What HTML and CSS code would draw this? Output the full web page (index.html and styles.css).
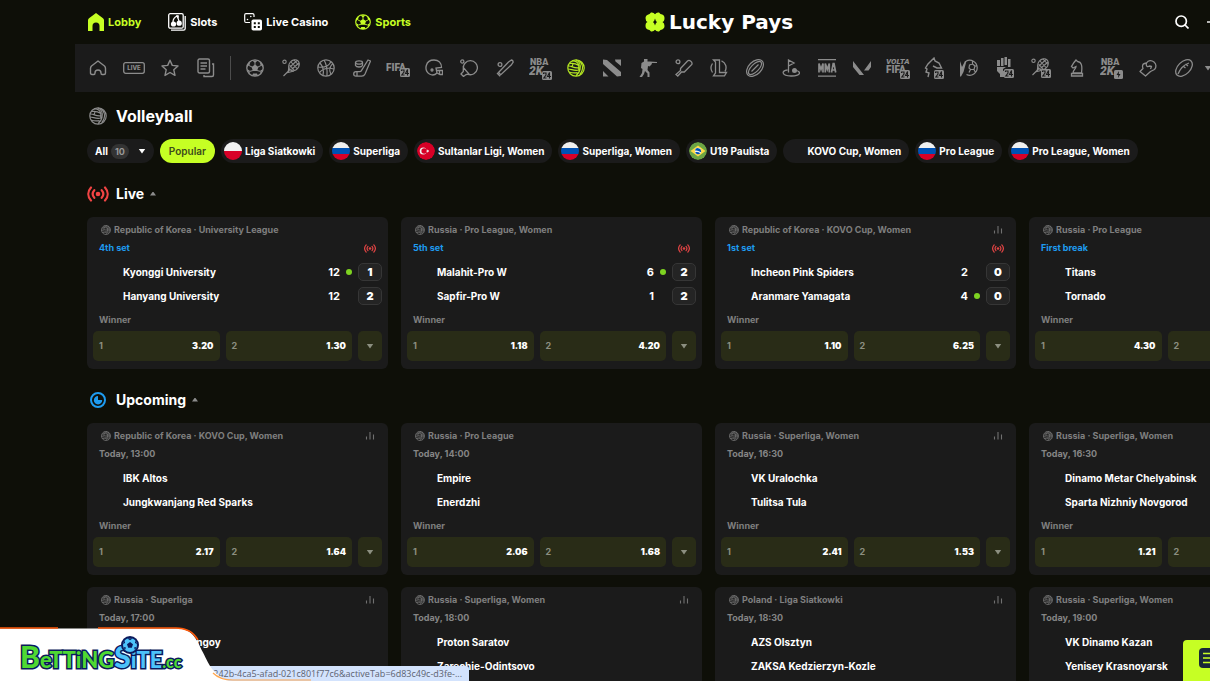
FILE: index.html
```html
<!DOCTYPE html>
<html lang="en">
<head>
<meta charset="utf-8">
<title>Lucky Pays – Volleyball</title>
<link rel="stylesheet" href="styles.css">
</head>
<body>
<svg class="sprite" aria-hidden="true">
  <symbol id="volley" viewBox="0 0 18 18"><g fill="none" stroke="currentColor" stroke-width="1.200"><circle cx="9" cy="9" r="8.200"/><path d="M5 2c3-.2 6 1.500 6.800 4.500M9 1c3.500 1.500 5 5 4 9.500-.5 2.500-2 4.500-4 6.300M12.500 1.800c3 3 3.700 6.500 2.500 10-.5 1.500-1.300 2.700-2.300 3.800M3 4.500c2.800-.5 6 .2 8.800 2v4.500M1.500 7c3.500-.3 5 2.500 10 1.800M1 10c3.500 0 6 2.200 10.800 1M2 13c2.500.8 5.500 1.200 8.500.6M6 4.800L5 7.800"/></g></symbol>
  <symbol id="football" viewBox="0 0 18 18"><circle cx="9" cy="9" r="8.200" fill="none" stroke="currentColor" stroke-width="1.300"/><path fill="currentColor" d="M9 5.500l3.400 2.500-1.300 4H6.900L5.600 8zM6 1.500h6L9 3.800zM.8 8l2.600-1.800 1-3.600L1.500 5zM17.200 8l-2.600-1.800-1-3.600L16.500 5zM3.500 15l.3-3.300L1 10zM14.500 15l-.3-3.300L17 10zM6 16.800l1-2.300h4l1 2.300z"/><path stroke="currentColor" d="M9 3v3M3 6.500L6 8M15 6.500L12 8M4 12.300l3-.8M14 12.300l-3-.8"/></symbol>
  <symbol id="live" viewBox="0 0 22 16"><g fill="none" stroke="currentColor" stroke-width="2.200" stroke-linecap="round"><path d="M4 1.500c-3.600 4-3.600 9 0 13M7.300 4.200c-2 2.300-2 5.300 0 7.600M18 1.500c3.600 4 3.600 9 0 13M14.700 4.200c2 2.300 2 5.300 0 7.600"/></g><circle cx="11" cy="8" r="2.300" fill="currentColor"/></symbol>
  <symbol id="stats" viewBox="0 0 10 10"><path fill="none" stroke="currentColor" stroke-width="1.100" d="M1.500 8.500V5.500M5 8.500V1M8.500 8.500V3.500"/></symbol>
  <symbol id="down" viewBox="0 0 8 6"><path fill="currentColor" d="M.8 1h6.400L4 5.500z"/></symbol>
  <symbol id="up" viewBox="0 0 8 6"><path fill="currentColor" d="M1 4.500h6L4.500 1h-1z"/></symbol>
  <symbol id="racket" viewBox="0 0 18 18"><g fill="none" stroke="currentColor" stroke-width="1.100"><circle cx="2.500" cy="2.800" r="1.700"/><ellipse cx="12" cy="6.300" rx="6" ry="4.800" transform="rotate(-50 12 6.300)"/><path d="M8.500 10L1.500 17M7 7.500l-1 6 6-1.500M9 3l6.500 7M12 1l5 5.500M7.500 6l5 5.500M8 8l7-6.500M9.500 10.500L17 4"/></g></symbol>
  <symbol id="badge24" viewBox="0 0 10 9"><rect width="10" height="9" rx="1.500" fill="#8c8c8c"/><path fill="none" stroke="#1b1b1b" stroke-width="1.100" d="M1.500 3V2h2.500v2L1.800 7H4.500M7.500 7.500V1.500L5.500 5.500h3.500"/></symbol>
</svg>

<header class="top">
  <nav class="menu" aria-label="Main">
    <a class="menu-link on" href="#"><svg width="16" height="18" viewBox="0 0 16 18"><path fill="currentColor" d="M8 0l7 5.200q1 .8 1 2V18h-4.500v-5a3.500 3.500 0 0 0-7 0v5H0V7.200q0-1.200 1-2z"/></svg>Lobby</a>
    <a class="menu-link" href="#"><svg width="18" height="18" viewBox="0 0 18 18"><g fill="none" stroke="currentColor" stroke-width="1.300"><rect x=".7" y=".7" width="14.500" height="14.500" rx="1.500"/><path d="M3 17.200h12.500q1.700 0 1.700-1.700V3"/><path d="M5 9c0-3 2-5 4-6 1 2 2 4 2 6"/></g><circle cx="5.500" cy="11" r="2.600" fill="currentColor"/><circle cx="11.200" cy="10.200" r="2.600" fill="currentColor"/><path fill="currentColor" d="M8 2l3 .5-.5 3z"/></svg>Slots</a>
    <a class="menu-link" href="#"><svg width="18" height="18" viewBox="0 0 18 18"><path fill="none" stroke="currentColor" stroke-width="1.200" d="M6 9.500H2Q.7 9.500.7 8V2Q.7.700 2 .7h6.500Q10 .7 10 2v2"/><circle cx="3.500" cy="6.500" r=".8" fill="currentColor"/><circle cx="6.800" cy="3.500" r=".8" fill="currentColor"/><rect x="7.500" y="6.500" width="10.500" height="11" rx="1.800" fill="currentColor"/><path fill="#0e0f08" d="M9.800 9.200h2v2h-2zM13.800 9.200h2v2h-2zM9.800 13h2v2h-2zM13.800 13h2v2h-2z"/></svg>Live Casino</a>
    <a class="menu-link on" href="#"><svg width="16" height="16"><use href="#football"/></svg>Sports</a>
  </nav>
  <a class="brand" href="#"><svg width="20" height="20" viewBox="0 0 20 20"><path fill="#c6ff24" fill-rule="evenodd" d="M6 .5Q8.500 0 10 2.200 11.500 0 14 .5L15.500 2Q19.500 2.500 19.500 6T17.500 10Q19.500 11 19.500 14T15.500 18L14 19.500Q11.500 20 10 17.800 8.500 20 6 19.500L4.500 18Q.5 17.500.5 14T2.500 10Q.5 9 .5 6T4.500 2zM10 6.500Q9.500 9 8 10q1.500 1 2 3.500 .5-2.500 2-3.500-1.500-1-2-3.500z"/></svg>Lucky Pays</a>
  <div class="tools">
    <button class="bare" aria-label="Search"><svg width="14" height="14" viewBox="0 0 14 14"><g fill="none" stroke="currentColor" stroke-width="1.700"><circle cx="6.200" cy="6.200" r="5.200"/><path d="M10 10l3.500 3.500"/></g></svg></button>
    <button class="bare" aria-label="Menu"><svg width="16" height="14" viewBox="0 0 16 14"><path d="M0 7h16" stroke="currentColor" stroke-width="1.400"/></svg></button>
  </div>
</header>

<nav class="sportbar" aria-label="Sports">
  <div class="quick">
    <a href="#" aria-label="Home"><svg class="ic" viewBox="0 0 18 18"><path fill="none" stroke="currentColor" stroke-width="1.400" stroke-linejoin="round" d="M2.500 7L9 2l6.500 5q1 1 1 2.500V14q0 1.500-1.500 1.500h-2q-1 0-1-1.500c0-4-6-4-6 0q0 1.500-1 1.500H3q-1.500 0-1.500-1.500V9.500Q1.500 8 2.500 7z"/></svg></a>
    <a href="#" aria-label="Live"><svg width="22" height="12" viewBox="0 0 22 12"><rect x=".7" y=".7" width="20.600" height="10.600" rx="2" fill="none" stroke="currentColor" stroke-width="1.300"/><text class="tiny" x="11" y="8.300" text-anchor="middle">LIVE</text></svg></a>
    <a href="#" aria-label="Favourites"><svg class="ic" viewBox="0 0 18 18"><path fill="none" stroke="currentColor" stroke-width="1.400" stroke-linejoin="round" d="M9 1.200l2.300 5.200 5.700.6-4.200 3.800 1.200 5.600L9 13.500l-5 2.900 1.200-5.600L1 7l5.700-.6z"/></svg></a>
    <a href="#" aria-label="Bets"><svg width="18" height="20" viewBox="0 0 18 20"><g fill="none" stroke="currentColor" stroke-width="1.400"><rect x="1" y="1" width="11.500" height="14" rx="1.500"/><path d="M3.500 5h6.500M3.500 8h6.500M3.500 11h5M15 6h1.500v11q0 1.500-1.500 1.500H7V17"/></g></svg></a>
  </div>
  <span class="rule"></span>
  <div class="sports">
    <a href="#" aria-label="Football"><svg class="ic"><use href="#football"/></svg></a>
    <a href="#" aria-label="Tennis"><svg class="ic"><use href="#racket"/></svg></a>
    <a href="#" aria-label="Basketball"><svg class="ic" viewBox="0 0 18 18"><g fill="none" stroke="currentColor" stroke-width="1.200"><circle cx="9" cy="9" r="8.200"/><path d="M7 1c2.500 4 3.500 9 3 16M1 8c5.500.8 11-.8 13-5.500M2.500 13.500C6 9.500 11.500 8.500 17 10M14 15.500c-2.500-5-.5-9 2-11M3 4c3 3.500 4 7.500 3 12"/></g></svg></a>
    <a href="#" aria-label="Ice hockey"><svg class="ic" viewBox="0 0 18 18"><g fill="none" stroke="currentColor" stroke-width="1.300" stroke-linejoin="round"><path d="M15 1l2.500 1-5.500 13q-1 2.200-3.200 2.200H3Q.7 17.200.7 15t2.300-2.300h3.500q1.500 0 2.200-1.500z"/><ellipse cx="6" cy="3.500" rx="3.500" ry="1.700"/><path d="M2.500 3.500v3c1 2 6 2 7 0v-3M4 13v4"/></g></svg></a>
    <a href="#" aria-label="FIFA 24"><svg width="24" height="20" viewBox="0 0 24 20"><text class="mark" x="0" y="13">FIFA</text><use href="#badge24" x="14" y="10" width="10" height="9"/></svg></a>
    <a href="#" aria-label="American football"><svg class="ic" viewBox="0 0 18 18"><g fill="none" stroke="currentColor" stroke-width="1.300"><path d="M4.500 15C-1.500 11 .5 1 9 1c4.500 0 7.500 3 7.500 7.500l-5.500.5 1 5c-2 2-5 2.500-7.500 1zM11.500 11.500h6v4H15l-3-1.500M14.500 11.500v4"/><circle cx="7" cy="11" r="1"/></g></svg></a>
    <a href="#" aria-label="Table tennis"><svg class="ic" viewBox="0 0 18 18"><g fill="none" stroke="currentColor" stroke-width="1.300"><circle cx="2.300" cy="2.500" r="1.600"/><path d="M3.500 10a7 7 0 1 1 4.500 5.300M3.300 8.500L9 15l-3 .5L3.500 17.500 1 15l2.300-2.500z"/></g></svg></a>
    <a href="#" aria-label="Baseball"><svg class="ic" viewBox="0 0 18 18"><g fill="none" stroke="currentColor" stroke-width="1.300"><circle cx="4" cy="5.500" r="1.900"/><path d="M2.500 13.500L12.500 3l3-2q1.500.3 1.700 2l-2 3L4.800 15.700zM1 14l3.200 3.200"/></g></svg></a>
    <a href="#" aria-label="NBA 2K24"><svg width="24" height="24" viewBox="0 0 24 24"><text class="nba" x="1" y="9">NBA</text><text class="twok" x="0" y="19">2K</text><use href="#badge24" x="13" y="15" width="10" height="9"/></svg></a>
    <a class="on" href="#" aria-label="Volleyball"><svg class="ic"><use href="#volley"/></svg></a>
    <a href="#" aria-label="Dota 2"><svg class="ic" viewBox="0 0 18 18"><path fill="currentColor" d="M0 .5l4 .5 14 12v4l-4 .5L0 5zM12 .5h6V7l-5.500-4.500zM0 12l5.500 5.500H0z"/></svg></a>
    <a href="#" aria-label="Counter-Strike"><svg class="ic" viewBox="0 0 18 18"><path fill="currentColor" d="M5 0h3.500v2.500H11L18 3v1h-5l-.5 1.500-2 2-1.500-.5-.5 4 2 2.500V18H8.500v-3.500L6 12l-1 3-2 3H.5l2.500-4 .5-4L2 9l.5-5L5 2.500z"/></svg></a>
    <a href="#" aria-label="Cricket"><svg class="ic" viewBox="0 0 18 18"><g fill="none" stroke="currentColor" stroke-width="1.300"><circle cx="3" cy="2.800" r="1.900"/><path d="M5.500 9.500l7-7.500q1.500-1.300 3.300.2t1 3.300l-7.500 7.500H6.500l-3.700 4-1.800-1.500 4.500-4z"/></g></svg></a>
    <a href="#" aria-label="League of Legends"><svg class="ic" viewBox="0 0 18 18"><g fill="none" stroke="currentColor" stroke-width="1.300"><path d="M3.500 1h6v12.500h7L14.500 16.800h-11L5.500 14V3zM11.500 1.800a7.300 7.300 0 0 1 3.500 10.500M2.500 4.500a8 8 0 0 0 0 9"/></g></svg></a>
    <a href="#" aria-label="Rugby"><svg class="ic" viewBox="0 0 18 18"><g fill="none" stroke="currentColor" stroke-width="1.200"><ellipse cx="9" cy="9" rx="10" ry="6.400" transform="rotate(-45 9 9)"/><ellipse cx="9" cy="9" rx="8.500" ry="3.800" transform="rotate(-45 9 9)"/><path d="M5.500 12.500l7-7"/></g></svg></a>
    <a href="#" aria-label="Golf"><svg class="ic" viewBox="0 0 18 18"><g fill="none" stroke="currentColor" stroke-width="1.300"><path d="M6.500 13.500V1L12 4 6.500 7M5.500 11C-1 11.500-.5 16.800 9 17s10.500-4 5.500-5.500"/></g><circle cx="12.500" cy="11.500" r="2.500" fill="currentColor"/></svg></a>
    <a href="#" aria-label="MMA"><svg width="20" height="18" viewBox="0 0 20 18"><path fill="currentColor" d="M1 0h18v1.300H1zM1 16.500h18v1.300H1z"/><path fill="none" stroke="currentColor" stroke-width="1.700" d="M2 13.500V4.500l2 6 2-6v9M8.300 13.500V4.500l2 6 2-6v9M14.500 13.500l1.700-9h.8l1.700 9M15 11h3.500"/></svg></a>
    <a href="#" aria-label="Valorant"><svg class="ic" viewBox="0 0 18 18"><path fill="currentColor" d="M0 2l11 14H6.500L0 8zM18 2v6l-2.500 3.500H11z"/></svg></a>
    <a href="#" aria-label="Volta FIFA 24"><svg width="24" height="24" viewBox="0 0 24 24"><text class="volta" x="0" y="8">VOLTA</text><text class="mark" x="0" y="17">FIFA</text><use href="#badge24" x="14" y="14" width="10" height="9"/></svg></a>
    <a href="#" aria-label="Horse racing 24"><svg width="20" height="22" viewBox="0 0 20 22"><path fill="none" stroke="currentColor" stroke-width="1.400" d="M4 20l1-4-3-1 1-3-1.500-1L4 7l3-3 3-3 1 3 4 2 2.500 5H13L9 9"/><use href="#badge24" x="10" y="13" width="10" height="9"/></svg></a>
    <a href="#" aria-label="Futsal"><svg class="ic" viewBox="0 0 18 18"><g fill="none" stroke="currentColor" stroke-width="1.200"><path d="M6 2.200A7.500 7.500 0 1 1 6.500 15.500M9.500 6l3-1L15 7l-1 3.500h-3.500L9 9zM12.500 1.500V5M15 7h2.500M14 10.500l1.500 3M10.500 10.500L9 13.500"/></g><path fill="currentColor" d="M0 2l2 6 3-6h1.500L3.500 13 1 17.500H0z"/></svg></a>
    <a href="#" aria-label="Fighting 24"><svg width="20" height="22" viewBox="0 0 20 22"><path fill="currentColor" d="M2 3h3v6H2zM6 1h2.500v8H6zM9.500 0H12v8H9.500zM13 2h2.500v8H13zM2 10h9l-3 2v2l6-2v4H9v4H5v-3l-3-3z"/><use href="#badge24" x="9" y="12" width="10" height="9"/></svg></a>
    <a href="#" aria-label="Tennis 24"><svg width="20" height="22" viewBox="0 0 20 22"><use href="#racket" x="0" y="1" width="18" height="18"/><use href="#badge24" x="10" y="12" width="10" height="9"/></svg></a>
    <a href="#" aria-label="Chess"><svg class="ic" viewBox="0 0 18 18"><g fill="none" stroke="currentColor" stroke-width="1.300"><path d="M5 14c0-3 3-4 3-6.500L5 9 3.500 7.500 6 3.500 8 1l1.500 1.500c4 .5 5 4 4 11.500zM3.500 14.500h11v2.500h-11z"/></g></svg></a>
    <a href="#" aria-label="NBA 2K special"><svg width="24" height="24" viewBox="0 0 24 24"><text class="nba" x="1" y="9">NBA</text><text class="twok" x="0" y="19">2K</text><rect x="14" y="14" width="9" height="9" rx="1.500" fill="#8c8c8c"/><path fill="#1b1b1b" d="M19 15l-2.500 4h1.800l-.3 3 2.500-4h-1.700z"/></svg></a>
    <a href="#" aria-label="Boxing"><svg class="ic" viewBox="0 0 18 18"><path fill="none" stroke="currentColor" stroke-width="1.300" stroke-linejoin="round" d="M1 12.500l3-3c-1-2.500-.5-4.500 1.500-5l2-.5c2-3 5-3 7.500-1s2.500 5.500.5 7.500l-4 2-5 4.500zM7.500 4c-1 3 1 4.500 3 3l2 .5-1 2.500"/></svg></a>
    <a href="#" aria-label="Aussie rules"><svg class="ic" viewBox="0 0 18 18"><g fill="none" stroke="currentColor" stroke-width="1.300"><ellipse cx="9" cy="9" rx="10" ry="6.200" transform="rotate(-45 9 9)"/><path d="M3 15c2-5 5-9 11-11M8 7l2.500 2M10.500 5l2.500 2"/></g></svg></a>
  </div>
  <button class="bare more" aria-label="More sports"><svg width="8" height="6"><use href="#down"/></svg></button>
</nav>

<main>
  <h1><svg width="18" height="18"><use href="#volley"/></svg>Volleyball</h1>
  <div class="pills">
    <button class="pill all">All <span class="count">10</span><svg width="8" height="6"><use href="#down"/></svg></button>
    <button class="pill popular">Popular</button>
    <button class="pill"><span class="flag pl"></span>Liga Siatkowki</button>
    <button class="pill"><span class="flag ru"></span>Superliga</button>
    <button class="pill"><svg class="flag" viewBox="0 0 18 18"><circle cx="9" cy="9" r="9" fill="#d80027"/><circle cx="6.200" cy="9" r="3.500" fill="#f0f0f0"/><circle cx="7.200" cy="9" r="2.800" fill="#d80027"/><path fill="#f0f0f0" d="M10.300 7.200l.6 1.100 1.300-.2-.9.900.9 1-1.300-.2-.6 1.200-.2-1.300-1.200-.6 1.200-.6z"/></svg>Sultanlar Ligi, Women</button>
    <button class="pill"><span class="flag ru"></span>Superliga, Women</button>
    <button class="pill"><svg class="flag" viewBox="0 0 18 18"><circle cx="9" cy="9" r="9" fill="#6da544"/><path fill="#ffda44" d="M9 3.500L16.500 9 9 14.500 1.500 9z"/><circle cx="9" cy="9" r="3.200" fill="#f0f0f0"/><path fill="#0052b4" d="M6.100 10.300a3.200 3.200 0 0 0 5.200 1Q8.800 9.500 6.100 10.300zM5.900 8.600a3.200 3.200 0 0 1 6.300.4q.1.600-.3 1.300Q9 8 5.900 8.600z"/></svg>U19 Paulista</button>
    <button class="pill"><span class="flag"></span>KOVO Cup, Women</button>
    <button class="pill"><span class="flag ru"></span>Pro League</button>
    <button class="pill"><span class="flag ru"></span>Pro League, Women</button>
  </div>

  <section>
    <h2><svg class="red" width="22" height="16"><use href="#live"/></svg>Live<svg class="caret" width="8" height="6"><use href="#up"/></svg></h2>
    <div class="cards">
      <article class="card">
        <div class="head"><svg><use href="#volley"/></svg>Republic of Korea · University League</div>
        <div class="state now">4th set<svg><use href="#live"/></svg></div>
        <div class="team">Kyonggi University<span class="pts">12</span><i class="serve on"></i><b>1</b></div>
        <div class="team">Hanyang University<span class="pts">12</span><i class="serve"></i><b>2</b></div>
        <div class="market">Winner</div>
        <div class="odds"><button>1<strong>3.20</strong></button><button>2<strong>1.30</strong></button><button class="open" aria-label="More"><svg><use href="#down"/></svg></button></div>
      </article>
      <article class="card">
        <div class="head"><svg><use href="#volley"/></svg>Russia · Pro League, Women</div>
        <div class="state now">5th set<svg><use href="#live"/></svg></div>
        <div class="team">Malahit-Pro W<span class="pts">6</span><i class="serve on"></i><b>2</b></div>
        <div class="team">Sapfir-Pro W<span class="pts">1</span><i class="serve"></i><b>2</b></div>
        <div class="market">Winner</div>
        <div class="odds"><button>1<strong>1.18</strong></button><button>2<strong>4.20</strong></button><button class="open" aria-label="More"><svg><use href="#down"/></svg></button></div>
      </article>
      <article class="card">
        <div class="head"><svg><use href="#volley"/></svg>Republic of Korea · KOVO Cup, Women<svg class="stat"><use href="#stats"/></svg></div>
        <div class="state now">1st set<svg><use href="#live"/></svg></div>
        <div class="team">Incheon Pink Spiders<span class="pts">2</span><i class="serve"></i><b>0</b></div>
        <div class="team">Aranmare Yamagata<span class="pts">4</span><i class="serve on"></i><b>0</b></div>
        <div class="market">Winner</div>
        <div class="odds"><button>1<strong>1.10</strong></button><button>2<strong>6.25</strong></button><button class="open" aria-label="More"><svg><use href="#down"/></svg></button></div>
      </article>
      <article class="card">
        <div class="head"><svg><use href="#volley"/></svg>Russia · Pro League</div>
        <div class="state now">First break</div>
        <div class="team">Titans</div>
        <div class="team">Tornado</div>
        <div class="market">Winner</div>
        <div class="odds"><button>1<strong>4.30</strong></button><button>2</button><button class="open" aria-label="More"><svg><use href="#down"/></svg></button></div>
      </article>
    </div>
  </section>

  <section>
    <h2><svg class="blue" width="22" height="16" viewBox="0 0 22 16"><circle cx="11" cy="8" r="7" fill="none" stroke="currentColor" stroke-width="2"/><path fill="currentColor" d="M11 4v4h4.200A4.200 4.200 0 1 1 11 4z"/></svg>Upcoming<svg class="caret" width="8" height="6"><use href="#up"/></svg></h2>
    <div class="cards">
      <article class="card">
        <div class="head"><svg><use href="#volley"/></svg>Republic of Korea · KOVO Cup, Women<svg class="stat"><use href="#stats"/></svg></div>
        <div class="state">Today, 13:00</div>
        <div class="team">IBK Altos</div>
        <div class="team">Jungkwanjang Red Sparks</div>
        <div class="market">Winner</div>
        <div class="odds"><button>1<strong>2.17</strong></button><button>2<strong>1.64</strong></button><button class="open" aria-label="More"><svg><use href="#down"/></svg></button></div>
      </article>
      <article class="card">
        <div class="head"><svg><use href="#volley"/></svg>Russia · Pro League</div>
        <div class="state">Today, 14:00</div>
        <div class="team">Empire</div>
        <div class="team">Enerdzhi</div>
        <div class="market">Winner</div>
        <div class="odds"><button>1<strong>2.06</strong></button><button>2<strong>1.68</strong></button><button class="open" aria-label="More"><svg><use href="#down"/></svg></button></div>
      </article>
      <article class="card">
        <div class="head"><svg><use href="#volley"/></svg>Russia · Superliga, Women<svg class="stat"><use href="#stats"/></svg></div>
        <div class="state">Today, 16:30</div>
        <div class="team">VK Uralochka</div>
        <div class="team">Tulitsa Tula</div>
        <div class="market">Winner</div>
        <div class="odds"><button>1<strong>2.41</strong></button><button>2<strong>1.53</strong></button><button class="open" aria-label="More"><svg><use href="#down"/></svg></button></div>
      </article>
      <article class="card">
        <div class="head"><svg><use href="#volley"/></svg>Russia · Superliga, Women</div>
        <div class="state">Today, 16:30</div>
        <div class="team">Dinamo Metar Chelyabinsk</div>
        <div class="team">Sparta Nizhniy Novgorod</div>
        <div class="market">Winner</div>
        <div class="odds"><button>1<strong>1.21</strong></button><button>2</button><button class="open" aria-label="More"><svg><use href="#down"/></svg></button></div>
      </article>
      <article class="card">
        <div class="head"><svg><use href="#volley"/></svg>Russia · Superliga<svg class="stat"><use href="#stats"/></svg></div>
        <div class="state">Today, 17:00</div>
        <div class="team">Fakel Novy Urengoy</div>
      </article>
      <article class="card">
        <div class="head"><svg><use href="#volley"/></svg>Russia · Superliga, Women<svg class="stat"><use href="#stats"/></svg></div>
        <div class="state">Today, 18:00</div>
        <div class="team">Proton Saratov</div>
        <div class="team">Zarechie-Odintsovo</div>
      </article>
      <article class="card">
        <div class="head"><svg><use href="#volley"/></svg>Poland · Liga Siatkowki<svg class="stat"><use href="#stats"/></svg></div>
        <div class="state">Today, 18:30</div>
        <div class="team">AZS Olsztyn</div>
        <div class="team">ZAKSA Kedzierzyn-Kozle</div>
      </article>
      <article class="card">
        <div class="head"><svg><use href="#volley"/></svg>Russia · Superliga, Women</div>
        <div class="state">Today, 19:00</div>
        <div class="team">VK Dinamo Kazan</div>
        <div class="team">Yenisey Krasnoyarsk</div>
      </article>
    </div>
  </section>
</main>

<div class="url">2-242b-4ca5-afad-021c801f77c6&amp;activeTab=6d83c49c-d3fe-...</div>
<aside class="sponsor">
  <svg class="wave" width="320" height="54" viewBox="0 0 320 54" aria-hidden="true"><path fill="#fff" d="M0 1.500h176c17 0 20 10 27 24s10 22 26 28.500H0z"/><path fill="none" stroke="#ff5a0a" stroke-width="1.500" d="M0 .9h58M98 .9h78c12 0 18 5 22 12"/><path fill="none" stroke="#ffa64d" stroke-width="1.200" d="M213 46q7 7 20 7h78"/></svg>
  <div class="wordmark"><span class="big">B</span><span>eTTiNG</span><span class="big sky">S</span><span class="sky">iTE</span><span class="cc">.cc</span></div>
  <svg class="ball" width="18" height="18" viewBox="0 0 18 18" aria-hidden="true"><circle cx="9" cy="9" r="9" fill="#0b1a5c"/><circle cx="9" cy="9" r="7" fill="#4cc2fa"/><path fill="#0b1a5c" d="M9 6l3 2.200-1.200 3.500H7.200L6 8.200zM6 2.300h6L9 4.200zM2 8l2-1-.2-2.500zM16 8l-2-1 .2-2.500zM4 14l1-2.500-2.500-.5zM14 14l-1-2.500 2.500-.5z"/></svg>
</aside>
<button class="slip" aria-label="Bet slip"><svg width="20" height="20" viewBox="0 0 20 20"><rect width="20" height="20" rx="4" fill="#182838"/><path stroke="#c6ff24" stroke-width="1.700" d="M4 5.500h14M4 10h14M4 14.500h14"/></svg></button>
</body>
</html>
```
FILE: styles.css
```css
* { box-sizing: border-box; }
body {
  margin: 0;
  height: 100vh;
  overflow: hidden;
  position: relative;
  background: #0e0f08;
  color: #fff;
  font: 700 10px/18px Inter, sans-serif;
}
a { color: inherit; text-decoration: none; }
button {
  margin: 0;
  border: 0;
  padding: 0;
  color: inherit;
  font: inherit;
  cursor: pointer;
}
svg { flex: none; }
.sprite { position: absolute; width: 0; height: 0; }
.bare { background: none; display: flex; align-items: center; }

.top {
  display: flex;
  align-items: center;
  height: 44px;
  padding-left: 88px;
}
.menu { display: flex; gap: 27px; height: 40px; }
.menu-link {
  display: flex;
  align-items: center;
  gap: 4px;
  font-size: 11px;
  white-space: nowrap;
}
.on { color: #c6ff24; }
.brand {
  display: flex;
  align-items: center;
  gap: 4px;
  margin-left: 234px;
  height: 40px;
  font: 700 20px/24px "DejaVu Sans", sans-serif;
  white-space: nowrap;
}
.tools { display: flex; gap: 18px; height: 40px; margin-left: auto; margin-right: -13px; }

.sportbar {
  display: flex;
  align-items: center;
  height: 48px;
  margin-left: 75px;
  padding-left: 11px;
  background: #1b1b1b;
  color: #8c8c8c;
}
.quick { display: flex; gap: 12px; }
.sports { display: flex; flex: 1; justify-content: space-between; }
.quick a, .sports a {
  display: flex;
  align-items: center;
  justify-content: center;
  width: 24px;
  height: 24px;
}
.sports .on { color: #b4e622; }
.ic { width: 18px; height: 18px; }
.rule { width: 1px; height: 24px; margin: 0 12px; background: #4c4c4c; }
.more { margin-left: 8px; margin-right: -2px; }
.tiny { font: 800 6px Inter, sans-serif; fill: currentColor; }
.mark { font: 900 10px Roboto, sans-serif; fill: currentColor; }
.nba { font: 900 9px Roboto, sans-serif; fill: currentColor; }
.twok { font: italic 900 12px Roboto, sans-serif; fill: currentColor; }
.volta { font: italic 900 8px Roboto, sans-serif; fill: currentColor; }

main { padding: 9px 0 0 87px; }
h1, h2 {
  display: flex;
  align-items: center;
  margin: 0 0 8px;
  height: 30px;
  font-weight: 700;
}
h1 { gap: 9px; padding-left: 2px; font-size: 16px; }
h1 svg { color: #8c8c8c; }
h2 { font-size: 14px; }
h2 svg:first-child { margin-right: 7px; }
.red { color: #f04444; }
.blue { color: #1e9bf0; }
.caret { margin-left: 5px; color: #8c8c8c; }

.pills { display: flex; gap: 6px; }
.pill {
  display: flex;
  align-items: center;
  gap: 3px;
  flex: none;
  height: 24px;
  padding: 0 8px 0 3px;
  border-radius: 12px;
  background: #1b1b1b;
  white-space: nowrap;
}
.all { padding: 0 8px; }
.all svg { margin-left: 6px; }
.count {
  padding: 0 4px;
  border-radius: 8px;
  background: #333;
  color: #999;
  font-size: 9px;
  line-height: 15px;
}
.popular { padding: 0 9px; background: #c6ff24; color: #3c4a1c; font-weight: 600; }
.flag { width: 18px; height: 18px; border-radius: 50%; }
.pl { background: linear-gradient(#f0f0f0 50%, #d80027 50%); }
.ru { background: linear-gradient(#f0f0f0 33%, #0052b4 33% 67%, #d80027 67%); }

section { margin-top: 16px; }
.cards {
  display: grid;
  grid-template-columns: repeat(4, 301px);
  gap: 12px 13px;
}
.card {
  min-height: 152px;
  padding: 4px 6px 8px;
  border-radius: 6px;
  background: #1b1b1b;
}
.head, .state, .team { display: flex; align-items: center; white-space: nowrap; }
.head {
  gap: 3px;
  height: 18px;
  padding: 0 7px 0 8px;
  color: #7f7f7f;
  font-size: 9px;
}
.head svg { width: 10px; height: 10px; }
.head .stat { margin-left: auto; color: #707070; }
.state {
  justify-content: space-between;
  height: 18px;
  margin-bottom: 3px;
  padding: 0 6px;
  color: #858585;
  font-size: 9px;
}
.now { color: #1e9bf0; }
.state svg { width: 12px; height: 9px; color: #e04444; }
.team { gap: 6px; height: 24px; padding-left: 30px; }
.pts { margin-left: auto; font-size: 11px; }
.serve { width: 6px; height: 6px; border-radius: 50%; }
.serve.on { background: #7ed321; }
.team b {
  width: 24px;
  height: 18px;
  border: 1px solid #363636;
  border-radius: 5px;
  background: #242424;
  font-size: 11px;
  line-height: 16px;
  text-align: center;
}
.market { margin: 3px 0 2px; padding-left: 6px; color: #7f7f7f; font-size: 9px; }
.odds { display: grid; grid-template-columns: 1fr 1fr 24px; gap: 6px; }
.odds button {
  display: flex;
  align-items: center;
  justify-content: space-between;
  height: 30px;
  padding: 0 6px;
  border-radius: 5px;
  background: #292c17;
  color: #8c8f80;
  font-size: 9px;
}
.odds strong { color: #fff; }
.odds .open { justify-content: center; }
.open svg { width: 8px; height: 6px; }

.url {
  position: absolute;
  left: 0;
  bottom: 0;
  width: 469px;
  padding-right: 7px;
  border-radius: 0 3px 0 0;
  background: #d3e3fd;
  color: #5c6270;
  font: 400 9px/15px "Open Sans", sans-serif;
  text-align: right;
}
.sponsor { position: absolute; left: 0; bottom: 0; height: 54px; }
.wave { display: block; }
.wordmark {
  position: absolute;
  left: 20px;
  top: 12px;
  display: flex;
  align-items: baseline;
  color: #4fd832;
  font: 900 22px/34px Lato, sans-serif;
  -webkit-text-stroke: 3px #0b1a5c;
  paint-order: stroke fill;
}
.wordmark .big { font-size: 30px; }
.wordmark .sky { color: #4cc2fa; }
.wordmark .cc { font-size: 16px; }
.ball { position: absolute; left: 121px; top: 9px; }
.slip {
  position: absolute;
  right: 0;
  bottom: 0;
  width: 27px;
  height: 41px;
  padding-left: 16px;
  overflow: hidden;
  border-radius: 4px 0 0 0;
  background: #c6ff24;
}
```
